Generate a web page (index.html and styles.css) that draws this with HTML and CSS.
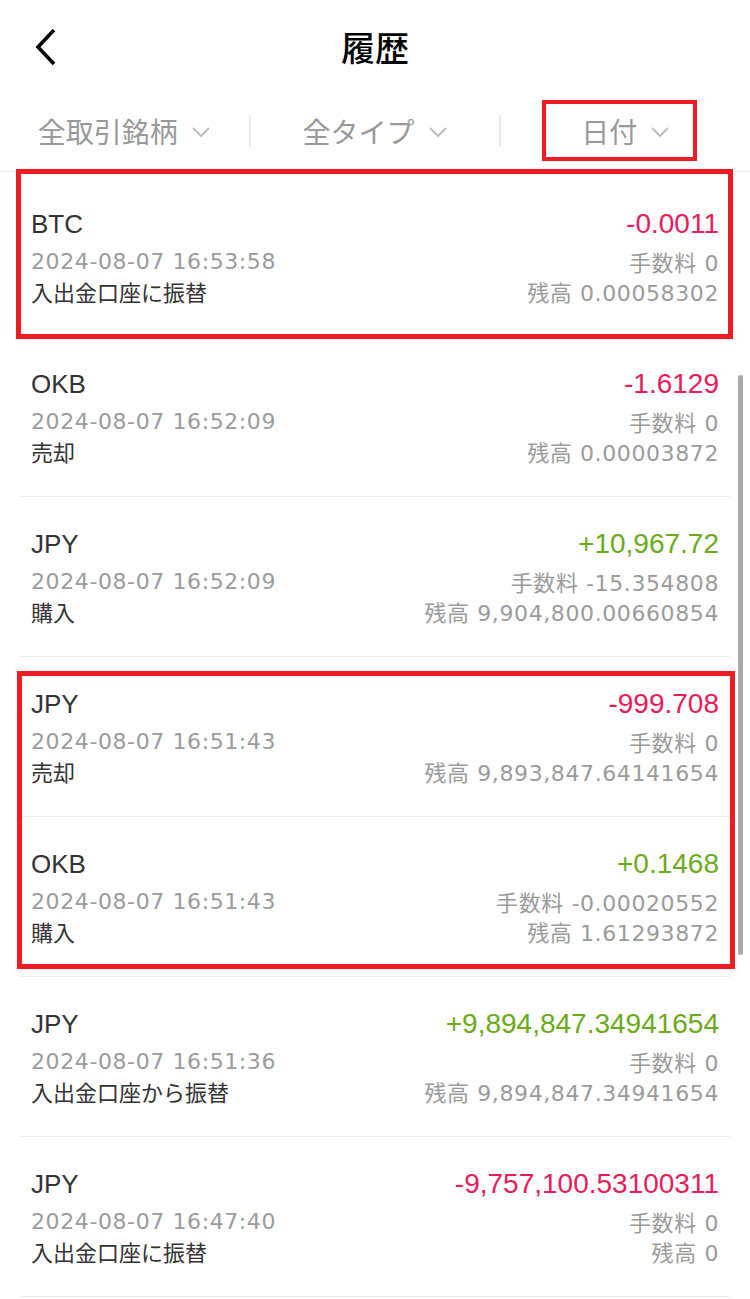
FILE: index.html
```html
<!DOCTYPE html>
<html lang="ja">
<head>
<meta charset="utf-8">
<title>履歴</title>
<link rel="stylesheet" href="styles.css">
</head>
<body>
<div class="page">
  <header class="header">
    <svg class="back" width="24" height="40" viewBox="0 0 24 40"><polyline points="20,3 4,20 20,37" fill="none" stroke="#000" stroke-width="3.6" stroke-linecap="butt" stroke-linejoin="miter"/></svg>
    <h1 class="title">履歴</h1>
  </header>
  <nav class="filters">
    <div class="filter"><span>全取引銘柄</span><svg class="caret" width="20" height="12" viewBox="0 0 20 12"><polyline points="2,2 10,10 18,2" fill="none" stroke="#bdbdbd" stroke-width="2"/></svg></div>
    <div class="sep"></div>
    <div class="filter"><span>全タイプ</span><svg class="caret" width="20" height="12" viewBox="0 0 20 12"><polyline points="2,2 10,10 18,2" fill="none" stroke="#bdbdbd" stroke-width="2"/></svg></div>
    <div class="sep"></div>
    <div class="filter"><span>日付</span><svg class="caret" width="20" height="12" viewBox="0 0 20 12"><polyline points="2,2 10,10 18,2" fill="none" stroke="#bdbdbd" stroke-width="2"/></svg></div>
  </nav>
  <main class="list">
    <div class="row">
      <div class="line l1"><span class="sym">BTC</span><span class="amt neg">-0.0011</span></div>
      <div class="line l2"><span class="gray">2024-08-07 16:53:58</span><span class="gray">手数料 0</span></div>
      <div class="line l3"><span class="type">入出金口座に振替</span><span class="gray">残高 0.00058302</span></div>
    </div>
    <div class="row">
      <div class="line l1"><span class="sym">OKB</span><span class="amt neg">-1.6129</span></div>
      <div class="line l2"><span class="gray">2024-08-07 16:52:09</span><span class="gray">手数料 0</span></div>
      <div class="line l3"><span class="type">売却</span><span class="gray">残高 0.00003872</span></div>
    </div>
    <div class="row">
      <div class="line l1"><span class="sym">JPY</span><span class="amt pos">+10,967.72</span></div>
      <div class="line l2"><span class="gray">2024-08-07 16:52:09</span><span class="gray">手数料 -15.354808</span></div>
      <div class="line l3"><span class="type">購入</span><span class="gray">残高 9,904,800.00660854</span></div>
    </div>
    <div class="row">
      <div class="line l1"><span class="sym">JPY</span><span class="amt neg">-999.708</span></div>
      <div class="line l2"><span class="gray">2024-08-07 16:51:43</span><span class="gray">手数料 0</span></div>
      <div class="line l3"><span class="type">売却</span><span class="gray">残高 9,893,847.64141654</span></div>
    </div>
    <div class="row">
      <div class="line l1"><span class="sym">OKB</span><span class="amt pos">+0.1468</span></div>
      <div class="line l2"><span class="gray">2024-08-07 16:51:43</span><span class="gray">手数料 -0.00020552</span></div>
      <div class="line l3"><span class="type">購入</span><span class="gray">残高 1.61293872</span></div>
    </div>
    <div class="row">
      <div class="line l1"><span class="sym">JPY</span><span class="amt pos">+9,894,847.34941654</span></div>
      <div class="line l2"><span class="gray">2024-08-07 16:51:36</span><span class="gray">手数料 0</span></div>
      <div class="line l3"><span class="type">入出金口座から振替</span><span class="gray">残高 9,894,847.34941654</span></div>
    </div>
    <div class="row">
      <div class="line l1"><span class="sym">JPY</span><span class="amt neg">-9,757,100.53100311</span></div>
      <div class="line l2"><span class="gray">2024-08-07 16:47:40</span><span class="gray">手数料 0</span></div>
      <div class="line l3"><span class="type">入出金口座に振替</span><span class="gray">残高 0</span></div>
    </div>
  </main>
  <div class="scrollthumb"></div>
  <div class="mark mark-date"></div>
  <div class="mark mark-first"></div>
  <div class="mark mark-pair"></div>
</div>
</body>
</html>
```

FILE: styles.css
```css
html, body {
  margin: 0;
  padding: 0;
  background: #fff;
}
.page {
  position: relative;
  width: 750px;
  height: 1299px;
  overflow: hidden;
  font-family: "Liberation Sans", "Noto Sans CJK JP", sans-serif;
}
.header {
  height: 94px;
  display: flex;
  align-items: center;
  justify-content: center;
  position: relative;
}
.back {
  position: absolute;
  left: 34px;
  top: 27px;
}
.title {
  margin: 0;
  font-family: "Noto Sans CJK JP", sans-serif;
  font-size: 34px;
  font-weight: 500;
  color: #000;
  line-height: 40px;
}
.filters {
  height: 77px;
  border-bottom: 1px solid #ebebeb;
  display: flex;
  align-items: center;
}
.filter {
  flex: 1;
  display: flex;
  align-items: center;
  justify-content: center;
  gap: 13px;
  font-family: "Noto Sans CJK JP", sans-serif;
  font-size: 28px;
  color: #999;
  padding-bottom: 4px;
}
.caret {
  margin-top: 2px;
}
.sep {
  width: 2px;
  height: 32px;
  background: #ececec;
  margin-bottom: 4px;
}
.list {
  padding-top: 5px;
}
.row {
  margin: 0 20px;
  padding: 29px 11px 27px;
  border-bottom: 1px solid #ececec;
}
.line {
  display: flex;
  justify-content: space-between;
  align-items: center;
  white-space: nowrap;
  box-sizing: border-box;
}
.l1 { height: 36px; }
.l2 { height: 34px; padding-top: 4px; }
.l3 { height: 33px; padding-bottom: 3px; }
.sym {
  font-size: 26px;
  color: #333;
}
.amt {
  font-size: 28px;
}
.neg { color: #e91c5b; }
.pos { color: #6aab1b; }
.gray {
  font-family: "DejaVu Sans", "Noto Sans CJK JP", sans-serif;
  font-size: 22px;
  letter-spacing: 0.6px;
  color: #9b9b9b;
}
.type {
  font-family: "Noto Sans CJK JP", sans-serif;
  font-size: 22px;
  color: #333;
}
.scrollthumb {
  position: absolute;
  left: 738px;
  top: 375px;
  width: 5px;
  height: 580px;
  border-radius: 3px;
  background: #a8a8a8;
}
.mark {
  position: absolute;
  border: 4px solid #ee1c25;
  box-sizing: border-box;
}
.mark-date {
  left: 542px;
  top: 100px;
  width: 155px;
  height: 61px;
}
.mark-first {
  left: 16px;
  top: 169px;
  width: 717px;
  height: 170px;
  border-width: 5px;
}
.mark-pair {
  left: 17px;
  top: 671px;
  width: 718px;
  height: 298px;
  border-width: 5px;
}
```
